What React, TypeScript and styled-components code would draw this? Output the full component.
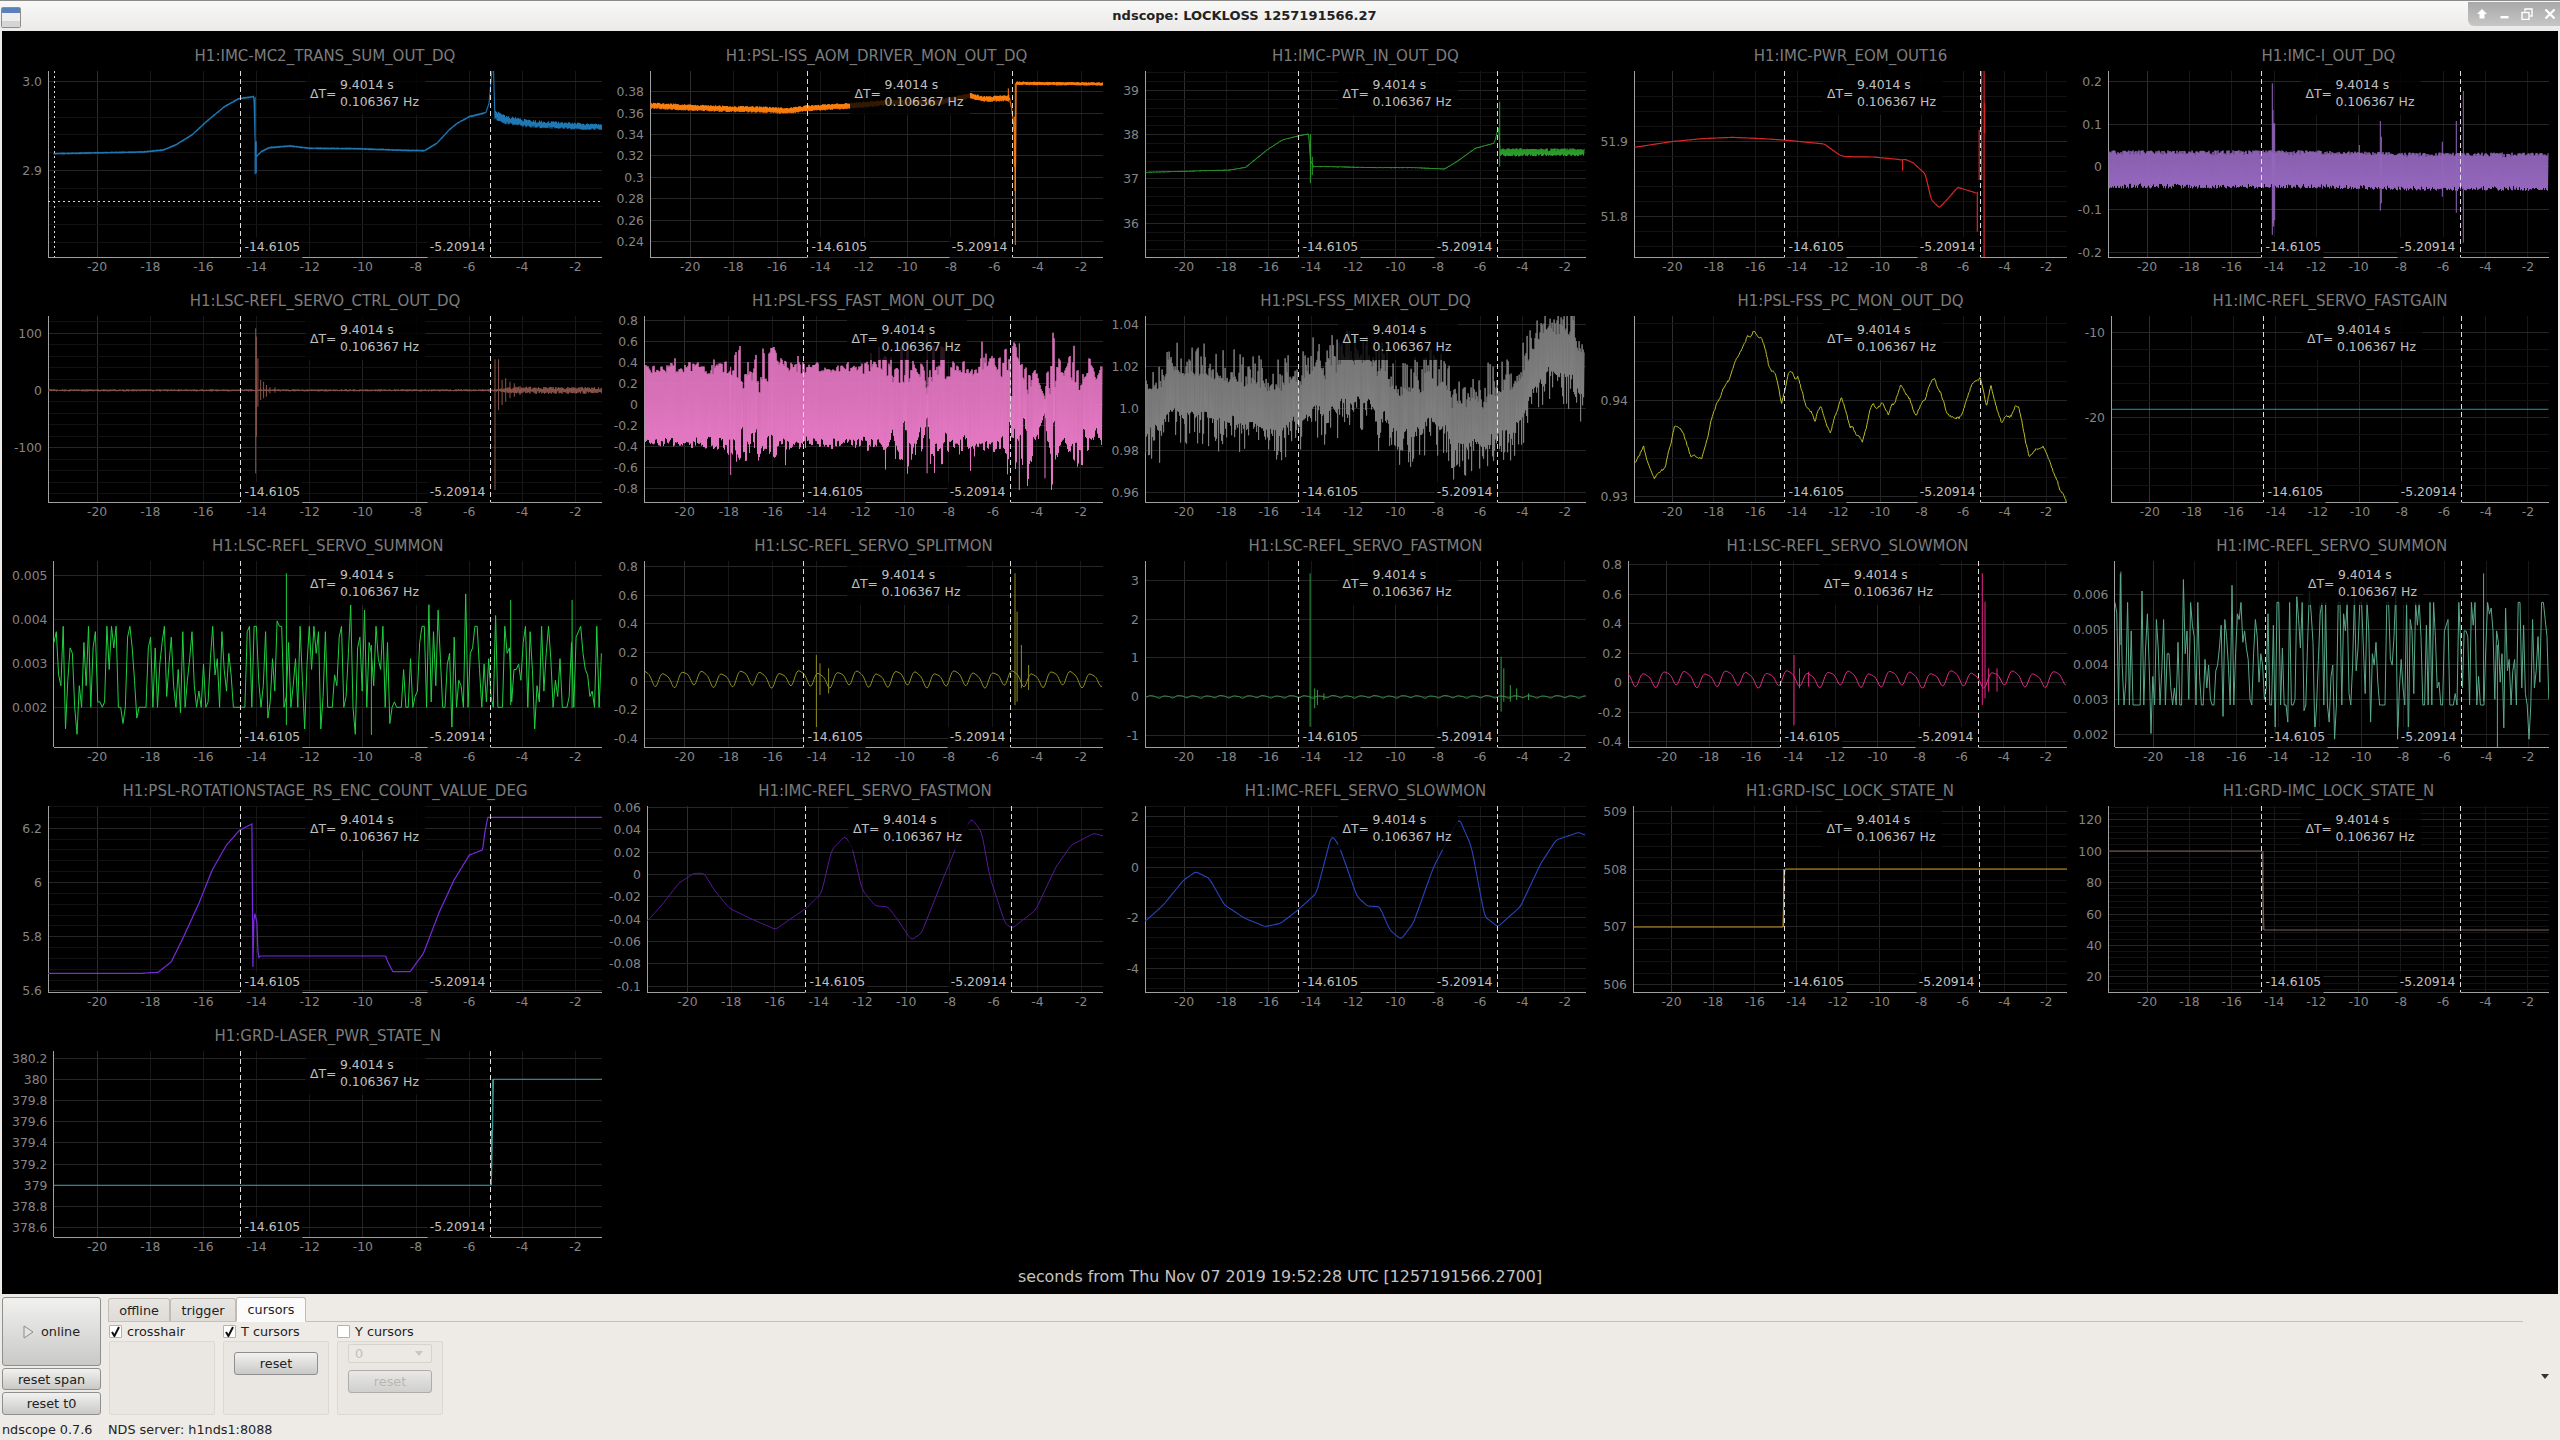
import React from "react";
import styled, { createGlobalStyle } from "styled-components";

type P2 = number[][];
type Trace = {
  pts?: P2;
  env?: P2;
  mode?: "line" | "band" | "spiky";
  dens?: number;
  spikes?: P2;
  wave?: { period: number; amp: number };
  smooth?: number;
  width?: number;
  fuzz?: number;
  burst?: number;
  jag?: { from: number; range: number; max: number; base: number };
  jitter?: { step: number; amp: number };
  rand?: { x0: number; x1: number; step: number; top: number; floor: number; quant: number; hi: number; lo: number };
};
type Plot = {
  title: string;
  col: number;
  row: number;
  left: number;
  mapLeft?: number;
  color: string;
  labels: string[];
  y0: number;
  pitch: number;
  minor?: number;
  trace: Trace;
};

const COL_START = [2, 610, 1110, 1593, 2075];
const COL_WIDTH = [608, 500, 483, 482, 483];
const COL_RIGHT = [602, 1103, 1586, 2067, 2549];
const TOP = (r: number) => 71 + 245 * r;
const PLOT_H = 186;

const Z = (ox: number, oy: number, sx: number, sy = 3) => (p: P2): P2 => p.map(([x, y]) => [ox + x / sx, oy + y / sy]);
const S = (ox: number, oy: number, sx: number, sy = 3) => (p: P2): P2 => p.map(([x, a, b]) => [ox + x / sx, oy + a / sy, oy + b / sy]);
const E = (ox: number, sx: number) => (p: P2): P2 => p.map(([x, a]) => [ox + x / sx, a]);

function mulberry(seed: number) {
  let a = seed >>> 0;
  return () => {
    a = (a + 0x6d2b79f5) >>> 0;
    let t = a;
    t = Math.imul(t ^ (t >>> 15), t | 1);
    t ^= t + Math.imul(t ^ (t >>> 7), t | 61);
    return ((t ^ (t >>> 14)) >>> 0) / 4294967296;
  };
}

function interp(list: P2, x: number) {
  if (x <= list[0][0]) return list[0][1];
  for (let i = 1; i < list.length; i++) {
    if (x <= list[i][0]) {
      const [a, b] = [list[i - 1], list[i]];
      const d = b[0] - a[0];
      return d <= 0 ? b[1] : a[1] + ((b[1] - a[1]) * (x - a[0])) / d;
    }
  }
  return list[list.length - 1][1];
}

function jittered(pts: P2, step: number, amp: number, rnd: () => number): P2 {
  const out: P2 = [];
  for (let i = 0; i < pts.length - 1; i++) {
    const [a, b] = [pts[i], pts[i + 1]];
    out.push(a);
    const n = Math.floor((b[0] - a[0]) / step);
    for (let k = 1; k < n; k++) {
      const f = k / n;
      out.push([a[0] + (b[0] - a[0]) * f, a[1] + (b[1] - a[1]) * f + (rnd() - 0.5) * 2 * amp]);
    }
  }
  out.push(pts[pts.length - 1]);
  return out;
}

function buildPath(tr: Trace, seed: number, ox: number, oy: number) {
  const rnd = mulberry(seed);
  const parts: string[] = [];
  const fmt = (x: number, y: number) => `${(x - ox).toFixed(1)} ${(y - oy).toFixed(1)}`;
  if (tr.rand) {
    const q = tr.rand;
    let first = true;
    for (let x = q.x0; x <= q.x1; x += q.step) {
      const a = rnd();
      const b = rnd();
      let y = q.top + (q.floor - q.top) * a;
      if (b < 0.22) y = q.floor;
      else if (b < 0.32) y = q.top;
      else if (b < 0.37) y = q.floor + (q.lo - q.floor) * rnd();
      else if (b < 0.41) y = q.top - (q.top - q.hi) * rnd();
      y = q.floor - Math.round((q.floor - y) / q.quant) * q.quant;
      parts.push(`${first ? "M" : "L"}${fmt(x, y)}`);
      first = false;
    }
  } else if (tr.pts) {
    const pts = tr.jitter ? jittered(tr.pts, tr.jitter.step, tr.jitter.amp, rnd) : tr.pts;
    const dens = tr.dens ?? 1;
    const x0 = pts[0][0];
    const x1 = pts[pts.length - 1][0];
    const n = Math.round((x1 - x0) * dens);
    const base: number[] = [];
    for (let i = 0; i <= n; i++) base.push(interp(pts, x0 + i / dens));
    const w = tr.smooth ?? 0;
    let sign = 1;
    let holdUp = 0;
    let holdDown = 0;
    const fuzz = tr.fuzz ?? 0.22;
    for (let i = 0; i <= n; i++) {
      const x = x0 + i / dens;
      let y = base[i];
      if (w > 0) {
        let sum = 0;
        let c = 0;
        for (let j = Math.max(0, i - w); j <= Math.min(n, i + w); j++) {
          sum += base[j];
          c++;
        }
        y = sum / c;
      }
      if (tr.wave) {
        const f = (2 * Math.PI * x) / tr.wave.period;
        y += -tr.wave.amp * (0.75 * Math.sin(f) + 0.18 * Math.sin(2 * f + 1) + 0.18 * Math.sin(f * 0.37));
      }
      const a = tr.env ? interp(tr.env, x) : 0;
      if (a > 0) {
        sign = -sign;
        if (tr.mode === "band") {
          if (i % 4 === 0) {
            holdUp = rnd();
            holdDown = rnd();
          }
          let e = a;
          if (tr.jag) {
            const k = Math.min(1, Math.max(0, (a - tr.jag.from) / tr.jag.range));
            const jag = tr.jag.base + k * tr.jag.max;
            e = a * (1 - jag * (sign > 0 ? holdUp : holdDown));
          }
          if (tr.burst && rnd() < tr.burst) e *= 1.18 + 0.3 * rnd();
          y += sign * e * (1 - fuzz + fuzz * Math.sqrt(rnd()));
        } else if (tr.mode === "spiky") {
          y += sign * a * (0.36 + 0.64 * Math.pow(rnd(), 2.6));
        } else {
          y += (rnd() + rnd() - 1) * a;
        }
      }
      parts.push(`${i === 0 ? "M" : "L"}${fmt(x, y)}`);
    }
  }
  for (const [x, a, b] of tr.spikes ?? []) parts.push(`M${fmt(x, a)}L${fmt(x, b)}`);
  return parts.join("");
}

const z1 = Z(0, 0, 2.45);
const z4 = Z(620, 30, 3);
const z6 = Z(1120, 60, 1.633);
const z7 = Z(2080, 60, 3);
const z8 = Z(0, 300, 1.4);
const z9 = Z(1120, 300, 1.633);
const z10 = Z(0, 545, 1.4);
const z11 = Z(1120, 545, 1.089);
const z12 = Z(0, 790, 0.98);
const z5 = Z(0, 1020, 2.45);
const TH = 1.633;

const PLOTS: Plot[] = [
  {
    title: "H1:IMC-MC2_TRANS_SUM_OUT_DQ", col: 0, row: 0, left: 48, color: "#1f77b4",
    labels: ["3.0", "2.9"], y0: 81.3, pitch: 89.4, minor: 5,
    trace: {
      pts: z1([[131, 461], [350, 456], [400, 450], [430, 435], [470, 405], [510, 360], [550, 320], [585, 296], [622, 290], [625, 430], [628, 470], [640, 455], [660, 443], [710, 438], [760, 445], [870, 446], [990, 451], [1040, 452], [1070, 430], [1100, 390], [1120, 370], [1150, 350], [1190, 338], [1198, 310], [1206, 200], [1209, 200], [1212, 345], [1240, 360], [1300, 372], [1475, 382]]),
      env: E(0, 2.45)([[131, 0.4], [1209, 0.4], [1212, 4.8], [1300, 4], [1475, 3.2]]),
      mode: "band", fuzz: 0.7, dens: 2, width: 1.1, spikes: S(0, 0, 2.45)([[625, 290, 523], [628, 424, 520]]),
    },
  },
  {
    title: "H1:PSL-ISS_AOM_DRIVER_MON_OUT_DQ", col: 1, row: 0, left: 650, color: "#ff7f0e",
    labels: ["0.38", "0.36", "0.34", "0.32", "0.3", "0.28", "0.26", "0.24"], y0: 91.7, pitch: 21.4,
    trace: {
      pts: z4([[92, 227], [214, 233], [330, 237], [440, 239], [500, 243], [560, 235], [680, 228], [800, 218], [960, 217], [1050, 197], [1090, 207], [1165, 205], [1167, 200], [1175, 235], [1185, 320], [1186, 640], [1188, 160], [1449, 162]]),
      env: E(620, 3)([[92, 3.2], [1165, 2.9], [1175, 1], [1186, 1], [1188, 1.8], [1449, 1.6]]),
      mode: "band", fuzz: 0.55, dens: 2, width: 1, spikes: S(620, 30, 3)([[1165, 175, 215], [1183, 260, 410], [1186, 160, 645]]),
    },
  },
  {
    title: "H1:IMC-PWR_IN_OUT_DQ", col: 2, row: 0, left: 1145, color: "#2ca02c",
    labels: ["39", "38", "37", "36"], y0: 90.3, pitch: 44.3, minor: 5,
    trace: {
      pts: z6([[41, 337], [180, 330], [205, 322], [240, 270], [265, 240], [290, 228], [308, 222], [311, 300], [316, 320], [340, 320], [420, 323], [480, 323], [530, 327], [550, 305], [580, 265], [610, 250], [613, 240], [618, 200], [621, 277], [758, 277]]),
      env: E(1120, 1.633)([[41, 0.5], [618, 0.5], [622, 4], [758, 3.8]]),
      mode: "band", fuzz: 0.7, dens: 2, width: 1, spikes: S(1120, 60, 1.633)([[311, 222, 370], [314, 290, 345], [620, 125, 320]]),
    },
  },
  {
    title: "H1:IMC-PWR_EOM_OUT16", col: 3, row: 0, left: 1634, color: "#d62728",
    labels: ["51.9", "51.8"], y0: 141.3, pitch: 75, minor: 5,
    trace: {
      pts: z6([[840, 262], [900, 245], [950, 236], [1000, 232], [1050, 236], [1090, 241], [1150, 252], [1175, 285], [1185, 290], [1230, 291], [1270, 298], [1277, 300], [1282, 298], [1295, 308], [1315, 342], [1325, 420], [1338, 443], [1350, 420], [1368, 382], [1395, 397], [1398, 400]]),
      dens: 1, smooth: 1, width: 1.2, spikes: S(1120, 60, 1.633)([[1278, 298, 332], [1400, 395, 515], [1403, 360, 210], [1407, 33, 360], [1411, 33, 592], [1412, 130, 220]]),
    },
  },
  {
    title: "H1:IMC-I_OUT_DQ", col: 4, row: 0, left: 2108, color: "#9467bd",
    labels: ["0.2", "0.1", "0", "-0.1", "-0.2"], y0: 81.3, pitch: 42.75,
    trace: {
      pts: z7([[87, 328], [700, 328], [1000, 335], [1404, 335]]),
      env: E(2080, 3)([[87, 19], [1404, 19]]),
      mode: "band", fuzz: 0.28, dens: 2, width: 1, spikes: S(2080, 60, 3)([[577, 70, 525], [579, 150, 490], [581, 190, 500], [584, 190, 480], [901, 183, 452], [904, 230, 430], [838, 255, 300], [1087, 245, 410], [1129, 183, 458], [1150, 93, 548]]),
    },
  },
  {
    title: "H1:LSC-REFL_SERVO_CTRL_OUT_DQ", col: 0, row: 1, left: 48, color: "#8c564b",
    labels: ["100", "0", "-100"], y0: 333.3, pitch: 57.2, minor: 5,
    trace: {
      pts: z8([[67, 271], [843, 271]]),
      env: E(0, 1.4)([[67, 1], [690, 1], [720, 3.6], [843, 3.2]]),
      mode: "band", fuzz: 0.8, dens: 1.5, width: 1,
      spikes: S(0, 300, 1.4)([[358, 85, 520], [359, 110, 410], [361, 175, 320], [365, 240, 300], [369, 245, 295], [373, 255, 290], [378, 262, 280], [385, 262, 278], [693, 178, 570], [698, 178, 330], [703, 240, 315], [708, 235, 305], [714, 245, 295], [720, 250, 290], [728, 258, 285]]),
    },
  },
  {
    title: "H1:PSL-FSS_FAST_MON_OUT_DQ", col: 1, row: 1, left: 644, color: "#e377c2",
    labels: ["0.8", "0.6", "0.4", "0.2", "0", "-0.2", "-0.4", "-0.6", "-0.8"], y0: 320.7, pitch: 21,
    trace: {
      pts: z8([[903, 316], [1543, 316]]),
      env: E(0, 1.4)([[903, 42], [960, 44], [1000, 46], [1030, 54], [1040, 66], [1048, 60], [1053, 26], [1058, 68], [1063, 88], [1070, 56], [1080, 66], [1090, 50], [1120, 44], [1180, 44], [1230, 48], [1240, 58], [1250, 28], [1258, 62], [1270, 74], [1282, 36], [1290, 66], [1298, 10], [1304, 60], [1320, 60], [1345, 46], [1400, 52], [1410, 62], [1420, 76], [1428, 46], [1437, 90], [1444, 60], [1450, 36], [1463, 8], [1468, 60], [1472, 92], [1480, 54], [1490, 34], [1505, 70], [1520, 62], [1535, 26], [1541, 44]]),
      mode: "band", fuzz: 0.08, burst: 0.04, jag: { from: 40, range: 30, max: 0.72, base: 0.16 }, dens: 2, width: 1,
      spikes: S(0, 300, 1.4)([[1023, 200, 525], [1298, 100, 520], [1427, 130, 570], [1463, 300, 535]]),
    },
  },
  {
    title: "H1:PSL-FSS_MIXER_OUT_DQ", col: 2, row: 1, left: 1145, color: "#7f7f7f",
    labels: ["1.04", "1.02", "1.0", "0.98", "0.96"], y0: 324, pitch: 42.2,
    trace: {
      pts: z9([[41, 320], [107, 290], [175, 310], [245, 330], [275, 310], [310, 280], [380, 260], [415, 270], [450, 330], [517, 320], [550, 370], [585, 370], [620, 340], [655, 300], [690, 170], [722, 160], [758, 230]]),
      jitter: { step: 5, amp: 11 },
      env: E(1120, 1.633)([[41, 52], [758, 54]]),
      mode: "spiky", dens: 2, width: 1,
    },
  },
  {
    title: "H1:PSL-FSS_PC_MON_OUT_DQ", col: 3, row: 1, left: 1634, color: "#bcbd22",
    labels: ["0.94", "0.93"], y0: 400.3, pitch: 96.4, minor: 5,
    trace: {
      pts: z9([[841, 490], [855, 440], [872, 535], [890, 505], [905, 380], [920, 400], [932, 470], [950, 475], [965, 365], [980, 295], [1000, 210], [1020, 130], [1035, 90], [1048, 115], [1060, 200], [1070, 220], [1080, 310], [1092, 215], [1107, 230], [1120, 320], [1135, 365], [1145, 320], [1160, 400], [1178, 290], [1192, 380], [1212, 425], [1225, 325], [1245, 310], [1255, 345], [1275, 255], [1300, 345], [1330, 235], [1350, 340], [1375, 345], [1392, 250], [1405, 235], [1415, 320], [1422, 255], [1440, 370], [1467, 320], [1485, 470], [1507, 440], [1530, 540], [1545, 605]]),
      jitter: { step: 3, amp: 4 },
      env: E(1120, 1.633)([[841, 1.4], [1545, 1.4]]),
      dens: 1.5, width: 1,
    },
  },
  {
    title: "H1:IMC-REFL_SERVO_FASTGAIN", col: 4, row: 1, left: 2111, color: "#17becf",
    labels: ["-10", "-20"], y0: 332.3, pitch: 85, minor: 5,
    trace: { pts: z7([[94, 1048], [1404, 1048]]), width: 1 },
  },
  {
    title: "H1:LSC-REFL_SERVO_SUMMON", col: 0, row: 2, left: 53.5, mapLeft: 48, color: "#20d040",
    labels: ["0.005", "0.004", "0.003", "0.002"], y0: 575, pitch: 44,
    trace: {
      rand: { x0: 54, x1: 602, step: 2.3, top: 626.7, floor: 707.3, quant: 5.4, hi: 590, lo: 735 },
      width: 1, spikes: S(0, 545, 1.4)([[401, 85, 540], [715, 165, 480], [801, 165, 490], [520, 300, 570]]),
    },
  },
  {
    title: "H1:LSC-REFL_SERVO_SPLITMON", col: 1, row: 2, left: 644, color: "#8c8c22",
    labels: ["0.8", "0.6", "0.4", "0.2", "0", "-0.2", "-0.4"], y0: 566.7, pitch: 28.6,
    trace: {
      pts: z10([[903, 400], [1543, 400]]), wave: { period: 19.4, amp: 9 }, dens: 1, width: 1,
      spikes: S(0, 545, 1.4)([[1143, 330, 555], [1148, 355, 450], [1160, 370, 445], [1421, 85, 480], [1424, 200, 470], [1430, 300, 430], [1440, 360, 435]]),
    },
  },
  {
    title: "H1:LSC-REFL_SERVO_FASTMON", col: 2, row: 2, left: 1145, color: "#2f9e44",
    labels: ["3", "2", "1", "0", "-1"], y0: 580.3, pitch: 38.7,
    trace: {
      pts: z11([[27, 455], [507, 455]]), wave: { period: 14, amp: 1.4 }, dens: 1, width: 1,
      spikes: S(1120, 545, 1.089)([[207, 85, 545], [212, 430, 490], [215, 435, 480], [222, 445, 465], [415, 335, 500], [418, 370, 470], [425, 420, 470], [432, 430, 465], [445, 445, 465]]),
    },
  },
  {
    title: "H1:LSC-REFL_SERVO_SLOWMON", col: 3, row: 2, left: 1628, color: "#e7298a",
    labels: ["0.8", "0.6", "0.4", "0.2", "0", "-0.2", "-0.4"], y0: 564.7, pitch: 29.5,
    trace: {
      pts: z11([[553, 400], [1030, 400]]), wave: { period: 20.5, amp: 9 }, dens: 1, width: 1,
      spikes: S(1120, 545, 1.089)([[734, 330, 540], [740, 370, 430], [750, 380, 425], [939, 85, 480], [942, 170, 460], [946, 370, 440], [955, 370, 440]]),
    },
  },
  {
    title: "H1:IMC-REFL_SERVO_SUMMON", col: 4, row: 2, left: 2114.5, color: "#5aa98a",
    labels: ["0.006", "0.005", "0.004", "0.003", "0.002"], y0: 594, pitch: 35,
    trace: {
      rand: { x0: 2115, x1: 2549, step: 1.8, top: 600, floor: 705, quant: 5.7, hi: 568, lo: 742 },
      width: 1, spikes: S(1120, 545, 1.089)([[1485, 85, 470], [1500, 300, 606], [1090, 80, 300]]),
    },
  },
  {
    title: "H1:PSL-ROTATIONSTAGE_RS_ENC_COUNT_VALUE_DEG", col: 0, row: 3, left: 48, color: "#7a2be0",
    labels: ["6.2", "6", "5.8", "5.6"], y0: 828.3, pitch: 54.2, minor: 5,
    trace: {
      pts: z12([[46, 550], [138, 550], [155, 547], [168, 515], [180, 440], [195, 340], [208, 240], [222, 165], [235, 120], [247, 102], [248, 590], [249, 360], [252, 400], [253, 505], [255, 498], [378, 498], [380, 515], [385, 545], [402, 545], [415, 490], [430, 370], [445, 270], [460, 195], [473, 180], [475, 130], [478, 82], [590, 82]]),
      dens: 1, width: 1.2,
    },
  },
  {
    title: "H1:IMC-REFL_SERVO_FASTMON", col: 1, row: 3, left: 647, color: "#5a1a9c",
    labels: ["0.06", "0.04", "0.02", "0", "-0.02", "-0.04", "-0.06", "-0.08", "-0.1"], y0: 807.3, pitch: 22.35,
    trace: {
      pts: z12([[634, 395], [650, 340], [665, 280], [680, 250], [690, 250], [700, 300], [715, 355], [735, 385], [760, 418], [790, 355], [805, 310], [815, 180], [828, 138], [835, 170], [845, 300], [858, 348], [870, 350], [880, 390], [893, 450], [903, 430], [925, 260], [940, 150], [952, 85], [962, 125], [970, 260], [985, 400], [992, 415], [1015, 360], [1035, 230], [1050, 165], [1072, 130], [1081, 138]]),
      dens: 1, smooth: 2, width: 1,
    },
  },
  {
    title: "H1:IMC-REFL_SERVO_SLOWMON", col: 2, row: 3, left: 1145, color: "#2a45c0",
    labels: ["2", "0", "-2", "-4"], y0: 816.7, pitch: 50.5, minor: 5,
    trace: {
      pts: z12([[1122, 395], [1140, 345], [1160, 270], [1172, 245], [1185, 265], [1200, 345], [1220, 385], [1240, 410], [1255, 400], [1272, 360], [1290, 310], [1305, 135], [1312, 165], [1330, 320], [1340, 348], [1352, 350], [1362, 420], [1373, 448], [1385, 400], [1405, 230], [1430, 85], [1442, 170], [1455, 380], [1468, 410], [1490, 350], [1510, 220], [1525, 150], [1547, 127], [1553, 135]]),
      dens: 1, smooth: 2, width: 1.1,
    },
  },
  {
    title: "H1:GRD-ISC_LOCK_STATE_N", col: 3, row: 3, left: 1633, color: "#c8951e",
    labels: ["509", "508", "507", "506"], y0: 811.5, pitch: 57.7, minor: 5,
    trace: {
      pts: [[1000 * TH, 927], [1092 * TH, 927], [1092.6 * TH, 869], [2067, 869]],
      dens: 1, width: 1, spikes: [[1092.3 * TH, 869, 927]],
    },
  },
  {
    title: "H1:GRD-IMC_LOCK_STATE_N", col: 4, row: 3, left: 2108, color: "#75605c",
    labels: ["120", "100", "80", "60", "40", "20"], y0: 819.8, pitch: 31.4, minor: 5,
    trace: {
      pts: [[2108, 851], [1385.5 * TH, 851], [1386 * TH, 930], [2549, 930]],
      dens: 1, width: 1, spikes: [[1385.8 * TH, 851, 930]],
    },
  },
  {
    title: "H1:GRD-LASER_PWR_STATE_N", col: 0, row: 4, left: 53.5, mapLeft: 48, color: "#3f9d9d",
    labels: ["380.2", "380", "379.8", "379.6", "379.4", "379.2", "379", "378.8", "378.6"], y0: 1058, pitch: 21.2,
    trace: {
      pts: z5([[131, 496], [1202, 496], [1204, 496], [1205, 330], [1207, 320], [1208, 178], [1475, 178]]),
      dens: 1, width: 1.1, spikes: S(0, 1020, 2.45)([[1204, 330, 496], [1207, 178, 330]]),
    },
  },
];

const GlobalStyle = createGlobalStyle`
  html, body { margin: 0; padding: 0; width: 2560px; height: 1440px; overflow: hidden; background: #eeebe6; }
  body { font-family: "DejaVu Sans", sans-serif; }
`;

const Window = styled.div`
  width: 2560px;
  height: 1440px;
  display: flex;
  flex-direction: column;
  background: #eeebe6;
`;

const TitleBar = styled.header`
  height: 31px;
  box-sizing: border-box;
  border-top: 1px solid #8b8b8b;
  display: flex;
  align-items: flex-start;
  background: linear-gradient(#f8f8f7, #ebeae8);
`;

const WindowIcon = styled.svg`
  width: 20px;
  height: 22px;
  margin: 6px 0 0 1px;
  flex: none;
`;

const WindowTitle = styled.div`
  flex: 1;
  text-align: center;
  font-size: 13px;
  font-weight: 700;
  line-height: 29px;
  color: #222;
`;

const WindowButtons = styled.div`
  width: 92px;
  height: 24px;
  margin-top: 1px;
  display: flex;
  align-items: center;
  gap: 10.5px;
  padding-left: 8px;
  box-sizing: border-box;
  background: linear-gradient(#a8a8a8, #c6c6c6);
  border-bottom-left-radius: 6px;
`;

const Scope = styled.main`
  height: 1263px;
  margin: 0 2px;
  background: #000;
  display: flex;
  flex-direction: column;
  padding-top: 10px;
  box-sizing: border-box;
`;

const PlotGrid = styled.section`
  display: grid;
  grid-template-columns: ${COL_WIDTH.map((w) => `${w}px`).join(" ")};
  grid-auto-rows: 245px;
  height: 1225px;
`;

const Cell = styled.article<{ $col: number; $row: number }>`
  grid-column: ${(p) => p.$col + 1};
  grid-row: ${(p) => p.$row + 1};
  display: flex;
  flex-direction: column;
`;

const PlotTitle = styled.h2<{ $left: number; $width: number }>`
  margin: 0 0 0 ${(p) => p.$left}px;
  width: ${(p) => p.$width}px;
  height: 30px;
  line-height: 30px;
  text-align: center;
  font-size: 15px;
  font-weight: 400;
  color: #7c7c7c;
  white-space: nowrap;
`;

const PlotSvg = styled.svg`
  display: block;
  overflow: visible;
  font-family: "DejaVu Sans", sans-serif;
`;

const GridLine = styled.line<{ $shade: string }>`
  stroke: ${(p) => p.$shade};
  stroke-width: 1;
  shape-rendering: crispEdges;
`;

const AxisLine = styled.line`
  stroke: #a0a0a0;
  stroke-width: 1;
  shape-rendering: crispEdges;
`;

const TickText = styled.text`
  font-size: 12.4px;
  fill: #858585;
`;

const CursorLine = styled.line`
  stroke: #dedede;
  stroke-width: 1;
  stroke-dasharray: 5 3;
  shape-rendering: crispEdges;
`;

const CrosshairLine = styled.line`
  stroke: #d8d8d8;
  stroke-width: 1;
  stroke-dasharray: 2 3;
  shape-rendering: crispEdges;
`;

const CursorText = styled.text`
  font-size: 12.4px;
  fill: #c0c0c0;
`;

const Veil = styled.rect`
  fill: rgba(0, 0, 0, 0.8);
`;

const TracePath = styled.path<{ $color: string; $w: number }>`
  fill: none;
  stroke: ${(p) => p.$color};
  stroke-width: ${(p) => p.$w};
  stroke-linejoin: miter;
`;

const XAxisCaption = styled.div`
  height: 22px;
  line-height: 22px;
  text-align: center;
  font-size: 15.85px;
  color: #c4c4c4;
`;

const ControlPanel = styled.footer`
  flex: 1;
  display: flex;
  flex-direction: column;
  padding: 3px 0 0 2px;
  font-size: 12.8px;
  color: #222;
`;

const ControlRow = styled.div`
  height: 119px;
  display: flex;
  gap: 7px;
`;

const LeftButtons = styled.div`
  width: 99px;
  display: flex;
  flex-direction: column;
  gap: 2px;
`;

const Button = styled.button<{ $h: number; $off?: boolean }>`
  height: ${(p) => p.$h}px;
  box-sizing: border-box;
  padding: 0;
  font: inherit;
  color: ${(p) => (p.$off ? "#b9b7b3" : "#222")};
  border: 1px solid ${(p) => (p.$off ? "#aeadaa" : "#8f8f8f")};
  border-radius: 3px;
  background: ${(p) => (p.$off ? "linear-gradient(#e9e8e6, #cfcfcd)" : "linear-gradient(#f1f1f0, #c9c9c8)")};
  display: flex;
  align-items: center;
  justify-content: center;
  gap: 7px;
`;

const TabArea = styled.div`
  flex: 1;
  display: flex;
  flex-direction: column;
  padding-right: 37px;
`;

const TabBar = styled.nav`
  height: 25px;
  box-sizing: border-box;
  border-bottom: 1px solid #c4c1bb;
  display: flex;
  align-items: flex-end;
`;

const Tab = styled.div<{ $w: number; $active?: boolean }>`
  width: ${(p) => p.$w}px;
  height: ${(p) => (p.$active ? 25 : 23)}px;
  box-sizing: border-box;
  border: 1px solid #bfbcb6;
  border-bottom: ${(p) => (p.$active ? "1px solid #fbfbfb" : "none")};
  margin-bottom: ${(p) => (p.$active ? -1 : 0)}px;
  border-radius: 3px 3px 0 0;
  background: ${(p) => (p.$active ? "#fbfbfb" : "linear-gradient(#e8e6e2, #dfdcd7)")};
  display: flex;
  align-items: center;
  justify-content: center;
`;

const TabPane = styled.div`
  display: flex;
  gap: 8px;
  padding-left: 1px;
`;

const CursorColumn = styled.div`
  width: 106px;
  display: flex;
  flex-direction: column;
`;

const CheckRow = styled.label`
  height: 19px;
  display: flex;
  align-items: center;
  gap: 5px;
`;

const CheckBox = styled.span`
  width: 13px;
  height: 13px;
  box-sizing: border-box;
  border: 1px solid #b5b2ad;
  border-radius: 1px;
  background: #fff;
  display: flex;
  align-items: center;
  justify-content: center;
`;

const GroupBox = styled.div`
  height: 74px;
  box-sizing: border-box;
  border: 1px solid #dcd9d4;
  border-radius: 2px;
  background: #eae7e2;
  display: flex;
  flex-direction: column;
  align-items: center;
`;

const GroupGapTop = styled.div<{ $h: number }>`
  height: ${(p) => p.$h}px;
  flex: none;
`;

const WideButton = styled(Button)`
  width: 84px;
  flex: none;
`;

const Combo = styled.div`
  width: 84px;
  height: 19px;
  flex: none;
  box-sizing: border-box;
  border: 1px solid #d5d3ce;
  border-radius: 2px;
  background: #ece9e5;
  color: #c0beba;
  display: flex;
  align-items: center;
  justify-content: space-between;
  padding: 0 8px 0 6px;
  margin-bottom: 7px;
`;

const ComboArrow = styled.span`
  width: 0;
  height: 0;
  border-left: 4px solid transparent;
  border-right: 4px solid transparent;
  border-top: 5px solid #c8c6c2;
`;

const ExpandArrow = styled.svg`
  position: absolute;
  left: 2540px;
  top: 1373px;
`;

const StatusBar = styled.div`
  height: 24px;
  display: flex;
  align-items: center;
  line-height: 24px;
  padding-top: 3px;
  box-sizing: border-box;
`;

const StatusItem = styled.span<{ $w?: number }>`
  width: ${(p) => (p.$w ? `${p.$w}px` : "auto")};
  white-space: nowrap;
`;

const Check = () => (
  <svg width="9" height="11" viewBox="0 0 9 11">
    <path d="M1 6 L3.4 10 L8 1" fill="none" stroke="#111" strokeWidth="2" />
  </svg>
);

function PlotChart({ plot, index }: { plot: Plot; index: number }) {
  const ox = COL_START[plot.col];
  const oy = TOP(plot.row);
  const w = COL_WIDTH[plot.col];
  const right = COL_RIGHT[plot.col];
  const mapLeft = plot.mapLeft ?? plot.left;
  const xOf = (t: number) => mapLeft + ((t + 21.85) / 20.85) * (right - mapLeft) - ox;
  const L = plot.left - ox;
  const R = right - ox;
  const c1 = Math.round(xOf(-14.6105)) + 0.5;
  const c2 = Math.round(xOf(-5.20914)) + 0.5;
  const mid = (c1 + c2) / 2;
  const minorLines: number[] = [];
  const minor = plot.minor ?? 0;
  if (minor) {
    const st = plot.pitch / minor;
    for (let k = -20; k < 60; k++) {
      if (k % minor === 0) continue;
      const y = plot.y0 + k * st - oy;
      if (y > 0 && y < PLOT_H) minorLines.push(y);
    }
  }
  const ticks = [-20, -18, -16, -14, -12, -10, -8, -6, -4, -2];
  const clipId = `plot-clip-${index}`;
  return (
    <PlotSvg width={w} height={215} viewBox={`0 0 ${w} 215`}>
      <defs>
        <clipPath id={clipId}>
          <rect x={L} y={0} width={R - L} height={PLOT_H} />
        </clipPath>
      </defs>
      {ticks.map((t) => (
        <GridLine key={t} $shade={t === -20 ? "#2e2e2e" : t === -10 ? "#232323" : "#181818"} x1={xOf(t)} x2={xOf(t)} y1={0} y2={PLOT_H} />
      ))}
      {minorLines.map((y) => (
        <GridLine key={y} $shade="#121212" x1={L} x2={R} y1={y} y2={y} />
      ))}
      {plot.labels.map((_, i) => (
        <GridLine key={i} $shade="#262626" x1={L} x2={R} y1={plot.y0 + i * plot.pitch - oy} y2={plot.y0 + i * plot.pitch - oy} />
      ))}
      <AxisLine x1={L} x2={L} y1={0} y2={PLOT_H} />
      <AxisLine x1={L} x2={R} y1={PLOT_H} y2={PLOT_H} />
      <g clipPath={`url(#${clipId})`}>
        <TracePath $color={plot.color} $w={plot.trace.width ?? 1} d={buildPath(plot.trace, 1000 + index * 37, ox, oy)} />
      </g>
      {plot.labels.map((l, i) => (
        <TickText key={l} x={L - 6} y={plot.y0 + i * plot.pitch - oy + 4.5} textAnchor="end">
          {l}
        </TickText>
      ))}
      {ticks.map((t) => (
        <TickText key={t} x={xOf(t)} y={PLOT_H + 13.5} textAnchor="middle">
          {t}
        </TickText>
      ))}
      <Veil x={mid - 60} y={0} width={120} height={44} />
      <Veil x={c1} y={PLOT_H - 20} width={62} height={21} />
      <Veil x={c2 - 63} y={PLOT_H - 20} width={63} height={21} />
      <CursorLine x1={c1} x2={c1} y1={0} y2={PLOT_H} />
      <CursorLine x1={c2} x2={c2} y1={0} y2={PLOT_H} />
      {index === 0 && (
        <>
          <CrosshairLine x1={52.5} x2={52.5} y1={0} y2={PLOT_H} />
          <CrosshairLine x1={L} x2={R} y1={130.5} y2={130.5} />
        </>
      )}
      <CursorText x={mid - 55.5} y={27}>ΔT=</CursorText>
      <CursorText x={mid - 25.5} y={18}>9.4014 s</CursorText>
      <CursorText x={mid - 25.5} y={35}>0.106367 Hz</CursorText>
      <CursorText x={c1 + 4} y={PLOT_H - 6}>-14.6105</CursorText>
      <CursorText x={c2 - 5} y={PLOT_H - 6} textAnchor="end">-5.20914</CursorText>
    </PlotSvg>
  );
}

export default function App() {
  return (
    <Window>
      <GlobalStyle />
      <TitleBar>
        <WindowIcon viewBox="0 0 20 22">
          <rect x="0.5" y="0.5" width="19" height="20" rx="1" fill="#eeeeee" stroke="#8d8d8d" />
          <rect x="1" y="1" width="18" height="5" fill="#5b7fb8" />
          <rect x="1" y="14" width="18" height="6" fill="#d5d5d5" />
        </WindowIcon>
        <WindowTitle>ndscope: LOCKLOSS 1257191566.27</WindowTitle>
        <WindowButtons>
          <svg width="12" height="12" viewBox="0 0 12 12">
            <path d="M6 1 L11 6 H8.5 V10.5 H3.5 V6 H1 Z" fill="#fff" />
          </svg>
          <svg width="12" height="12" viewBox="0 0 12 12">
            <rect x="1.5" y="8" width="8" height="2.4" fill="#fff" />
          </svg>
          <svg width="12" height="12" viewBox="0 0 12 12">
            <rect x="1" y="4.5" width="7" height="7" fill="none" stroke="#fff" strokeWidth="1.4" />
            <path d="M4 3.5 V1 H11 V8 H9" fill="none" stroke="#fff" strokeWidth="1.4" />
          </svg>
          <svg width="12" height="12" viewBox="0 0 12 12">
            <path d="M1.5 1.5 L10.5 10.5 M10.5 1.5 L1.5 10.5" stroke="#fff" strokeWidth="2.2" />
          </svg>
        </WindowButtons>
      </TitleBar>
      <Scope>
        <PlotGrid>
          {PLOTS.map((p, i) => (
            <Cell key={p.title} $col={p.col} $row={p.row}>
              <PlotTitle $left={p.left - COL_START[p.col]} $width={COL_RIGHT[p.col] - p.left}>
                {p.title}
              </PlotTitle>
              <PlotChart plot={p} index={i} />
            </Cell>
          ))}
        </PlotGrid>
        <XAxisCaption>seconds from Thu Nov 07 2019 19:52:28 UTC [1257191566.2700]</XAxisCaption>
      </Scope>
      <ControlPanel>
        <ControlRow>
          <LeftButtons>
            <Button $h={69}>
              <svg width="11" height="14" viewBox="0 0 11 14">
                <path d="M1 1 L10 7 L1 13 Z" fill="#e4e4e2" stroke="#8c8c8c" />
              </svg>
              online
            </Button>
            <Button $h={22}>reset span</Button>
            <Button $h={23}>reset t0</Button>
          </LeftButtons>
          <TabArea>
            <TabBar>
              <Tab $w={62}>offline</Tab>
              <Tab $w={66}>trigger</Tab>
              <Tab $w={70} $active>cursors</Tab>
            </TabBar>
            <TabPane>
              <CursorColumn>
                <CheckRow>
                  <CheckBox><Check /></CheckBox>
                  crosshair
                </CheckRow>
                <GroupBox />
              </CursorColumn>
              <CursorColumn>
                <CheckRow>
                  <CheckBox><Check /></CheckBox>
                  T cursors
                </CheckRow>
                <GroupBox>
                  <GroupGapTop $h={10} />
                  <WideButton $h={23}>reset</WideButton>
                </GroupBox>
              </CursorColumn>
              <CursorColumn>
                <CheckRow>
                  <CheckBox />
                  Y cursors
                </CheckRow>
                <GroupBox>
                  <GroupGapTop $h={2} />
                  <Combo>
                    0
                    <ComboArrow />
                  </Combo>
                  <WideButton $h={23} $off>reset</WideButton>
                </GroupBox>
              </CursorColumn>
            </TabPane>
          </TabArea>
        </ControlRow>
        <StatusBar>
          <StatusItem $w={106}>ndscope 0.7.6</StatusItem>
          <StatusItem>NDS server: h1nds1:8088</StatusItem>
        </StatusBar>
      </ControlPanel>
      <ExpandArrow width="10" height="8" viewBox="0 0 10 8">
        <path d="M1 1 L5 6 L9 1 Z" fill="#333" />
      </ExpandArrow>
    </Window>
  );
}
